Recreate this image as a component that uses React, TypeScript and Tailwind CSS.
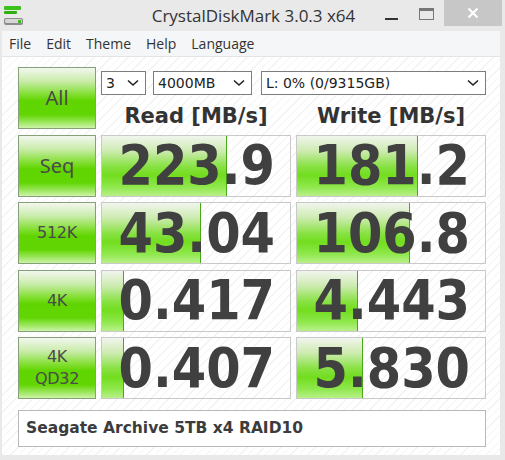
import React from 'react'

const STRIPES =
  'bg-[repeating-linear-gradient(135deg,#ffffff_0px,#ffffff_5px,#f3f3f3_5px,#f3f3f3_6px)]'

const ROWS = [
  { label: ['Seq'], read: '223.9', readW: 125, write: '181.2', writeW: 121 },
  { label: ['512K'], read: '43.04', readW: 99, write: '106.8', writeW: 113 },
  { label: ['4K'], read: '0.417', readW: 22, write: '4.443', writeW: 61 },
  { label: ['4K', 'QD32'], read: '0.407', readW: 22, write: '5.830', writeW: 66 },
]

function GreenButton({ lines, big }: { lines: string[]; big?: boolean }) {
  return (
    <div className="h-[62px] border-[1.5px] border-[#86a07a] bg-[linear-gradient(to_bottom,#f3f7ef_0%,#c9ecaa_22%,#7fde2c_45%,#5fd500_55%,#62d604_78%,#9ae65a_90%,#cdf3a8_100%)] flex flex-col items-center justify-center text-[#4a4a4a] leading-[22px]">
      {lines.map(l => (
        <span key={l} className={big ? 'text-[20px] font-["Noto_Sans",sans-serif]' : 'text-[16px] font-["DejaVu_Sans",sans-serif] tracking-[-0.3px]'}>
          {l}
        </span>
      ))}
    </div>
  )
}

function ValueBox({ value, width }: { value: string; width: number }) {
  return (
    <div className={`relative h-[62px] border border-[#c9c9c9] ${STRIPES} flex items-center justify-end pr-[15px] overflow-hidden`}>
      <div
        className="absolute left-0 top-0 bottom-0 border-r border-[#48a818] bg-[linear-gradient(to_bottom,#f1f5ee_0%,#cdebb0_25%,#8ae246_50%,#72dd1e_65%,#8fe84c_85%,#b9f08a_100%)]"
        style={{ width }}
      />
      <span className="relative text-[#404040] font-bold text-[55px] leading-none font-['DejaVu_Sans_Condensed','DejaVu_Sans',sans-serif]">
        {value}
      </span>
    </div>
  )
}

function Combo({ text, w }: { text: string; w: string }) {
  return (
    <div className={`${w} h-[24px] border border-[#7c7c7c] bg-white flex items-center justify-between pl-[4px] pr-[6px] text-[14px] text-[#222] font-['DejaVu_Sans',sans-serif]`}>
      <span>{text}</span>
      <svg width="12" height="8" viewBox="0 0 12 8">
        <path d="M1 1.5 L6 6 L11 1.5" fill="none" stroke="#222" strokeWidth="1.6" />
      </svg>
    </div>
  )
}

function AppIcon() {
  return (
    <svg width="22" height="22" viewBox="0 0 22 22">
      <rect x="1" y="2" width="17" height="4" rx="1" fill="#3cc21a" />
      <rect x="1" y="7" width="13" height="3" rx="1" fill="#2fb010" />
      <rect x="1" y="14" width="19" height="7" rx="2" fill="#8c8c8c" />
      <rect x="2" y="15" width="17" height="4" rx="1.5" fill="#d6d6d6" />
      <rect x="15" y="16" width="3" height="3" fill="#3cc21a" />
    </svg>
  )
}

export default function App() {
  return (
    <div className="w-[505px] h-[460px] bg-[#e9e9e9] flex flex-col overflow-hidden font-['Open_Sans','Noto_Sans',sans-serif]">
      {/* title bar */}
      <div className="h-[31px] flex items-start relative">
        <div className="pl-[3px] pt-[4px]">
          <AppIcon />
        </div>
        <div className="absolute left-0 right-0 top-[3px] text-center text-[17px] text-[#333] pl-[2px]">
          CrystalDiskMark 3.0.3 x64
        </div>
        <div className="ml-auto flex items-start relative">
          <div className="w-[13px] h-[2px] bg-[#333] mt-[18px] mr-[21px]" />
          <div className="w-[15px] h-[12px] border-[1.5px] border-[#777] border-t-[3px] mt-[8px] mr-[10px]" />
          <div className="w-[58px] h-[26px] bg-[#c7c7c7] flex items-center justify-center mr-[3px]">
            <svg width="12" height="12" viewBox="0 0 12 12">
              <path d="M1.5 1.5 L10.5 10.5 M10.5 1.5 L1.5 10.5" stroke="#fff" strokeWidth="2.2" />
            </svg>
          </div>
        </div>
      </div>

      {/* menu */}
      <div className="h-[26px] mx-[2px] mr-[5px] bg-[#f5f6f7] border-b border-[#e4e4e4] flex items-center text-[14px] text-[#333] pl-[7px] gap-[15px]">
        <span>File</span>
        <span>Edit</span>
        <span>Theme</span>
        <span>Help</span>
        <span>Language</span>
      </div>

      {/* content */}
      <div className={`flex-1 ml-[2px] mr-[5px] mb-[5px] ${STRIPES} pl-[16px] pt-[10px]`}>
        <div className="grid grid-cols-[78px_190px_190px] gap-x-[5px] gap-y-[5.5px]">
          <GreenButton lines={['All']} big />
          <div className="col-span-2 h-[62px] flex flex-col">
            <div className="flex mt-[4px] gap-[7px]">
              <Combo text="3" w="w-[45px]" />
              <Combo text="4000MB" w="w-[99px]" />
              <div className="ml-[2px]">
                <Combo text="L: 0% (0/9315GB)" w="w-[225px]" />
              </div>
            </div>
            <div className="flex flex-1 items-center text-[21px] font-bold text-[#333] font-['DejaVu_Sans',sans-serif] pt-[6px]">
              <div className="w-[190px] text-center">Read [MB/s]</div>
              <div className="w-[190px] ml-[5px] text-center">Write [MB/s]</div>
            </div>
          </div>
          {ROWS.map(r => (
            <React.Fragment key={r.read}>
              <GreenButton lines={r.label} big={r.label[0] === 'Seq'} />
              <ValueBox value={r.read} width={r.readW} />
              <ValueBox value={r.write} width={r.writeW} />
            </React.Fragment>
          ))}
        </div>
        <div className="mt-[11px] w-[468px] h-[37px] border border-[#b9b9b9] bg-white flex items-center pl-[7px] text-[15.5px] font-bold text-[#3c3c3c] font-['DejaVu_Sans',sans-serif]">
          Seagate Archive 5TB x4 RAID10
        </div>
      </div>
    </div>
  )
}
